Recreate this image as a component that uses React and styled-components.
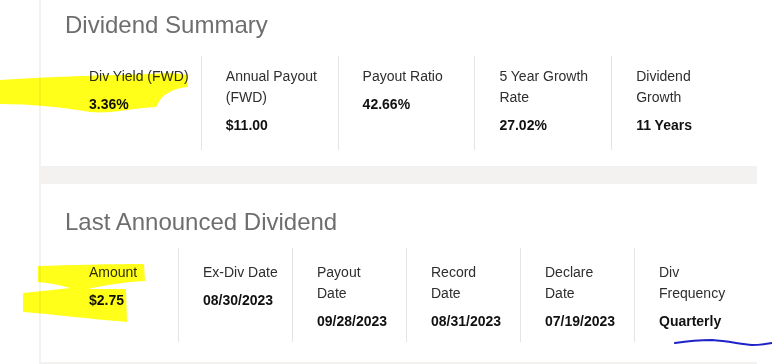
import styled, { createGlobalStyle } from "styled-components";

const GlobalStyle = createGlobalStyle`
    * { box-sizing: border-box; }
    body {
        margin: 0;
        background: #fff;
        font-family: "Liberation Sans", Arial, sans-serif;
    }
`;

const SPage = styled.div`
    position: relative;
    width: 772px;
    height: 364px;
    overflow: hidden;
    background: #fff;
`;

const SWrapper = styled.div`
    margin-left: 39px;
    width: 718px;
    padding: 0 0 2px 2px;
    display: flex;
    flex-direction: column;
    gap: 18px;
    background: #f4f2f0;
`;

const SCard = styled.section`
    background: #fff;
    padding: ${p => p.$pt}px 9px ${p => p.$pb}px 23px;
`;

const STitle = styled.h2`
    margin: 0 0 ${p => p.$mb}px 1px;
    font-size: 24px;
    line-height: 29px;
    font-weight: normal;
    color: #6e6e6e;
`;

const SRow = styled.div`
    display: flex;
`;

const SItem = styled.div`
    flex: 1 1 0;
    min-width: 0;
    padding: ${p => p.$pad};
    border-left: 1px solid #e4e4e4;

    &:first-child {
        border-left-color: transparent;
    }
`;

const SLabel = styled.div`
    font-size: 14px;
    line-height: 21px;
    color: #2e2e2e;
`;

const SValue = styled.div`
    margin-top: 7px;
    font-size: 14px;
    line-height: 21px;
    font-weight: bold;
    color: #111;
`;

// the marker strokes drawn over the screenshot
const SMarks = styled.svg`
    position: absolute;
    left: 0;
    top: 0;
    pointer-events: none;
    mix-blend-mode: multiply;
`;

const summary = [
    { label: "Div Yield (FWD)", value: "3.36%" },
    { label: "Annual Payout (FWD)", value: "$11.00" },
    { label: "Payout Ratio", value: "42.66%" },
    { label: "5 Year Growth Rate", value: "27.02%" },
    { label: "Dividend Growth", value: "11 Years" },
];

const announced = [
    { label: "Amount", value: "$2.75" },
    { label: "Ex-Div Date", value: "08/30/2023" },
    { label: "Payout Date", value: "09/28/2023" },
    { label: "Record Date", value: "08/31/2023" },
    { label: "Declare Date", value: "07/19/2023" },
    { label: "Div Frequency", value: "Quarterly" },
];

function Section({ title, items, pt, pb, titleGap, pad }) {
    return (
        <SCard $pt={pt} $pb={pb}>
            <STitle $mb={titleGap}>{title}</STitle>
            <SRow>
                {items.map(i => (
                    <SItem key={i.label} $pad={pad}>
                        <SLabel>{i.label}</SLabel>
                        <SValue>{i.value}</SValue>
                    </SItem>
                ))}
            </SRow>
        </SCard>
    );
}

export default function App() {
    return (
        <SPage>
            <GlobalStyle />
            <SWrapper>
                <Section title="Dividend Summary" items={summary} pt={10} pb={16} titleGap={17} pad="10px 10px 14px 24px" />
                <Section title="Last Announced Dividend" items={announced} pt={23} pb={20} titleGap={12} pad="14px 13px 10px 24px" />
            </SWrapper>

            <SMarks width="772" height="364" viewBox="0 0 772 364">
                <path
                    fill="#ffff1a"
                    d="M0,80 C40,77 110,75 150,74 C165,73 178,73 187,75 L188,87 C176,88 166,92 160,100 L156,107 C132,108 112,114 90,112 C62,107 30,104 0,104 Z"
                />
                <path
                    fill="#ffff1a"
                    d="M38,266 C70,265 110,264 144,264 L145,281 C125,282 105,285 88,289 L126,289 L127,322 C100,320 60,315 23,312 L23,293 C40,291 55,290 70,288 C60,285 50,283 38,282 Z"
                />
                <path
                    fill="none"
                    stroke="#1e22c8"
                    strokeWidth="2"
                    strokeLinecap="round"
                    d="M675,343 C688,341 700,340 712,340 C728,341 740,344 752,345 C760,345 766,344 772,343"
                />
            </SMarks>
        </SPage>
    );
}
